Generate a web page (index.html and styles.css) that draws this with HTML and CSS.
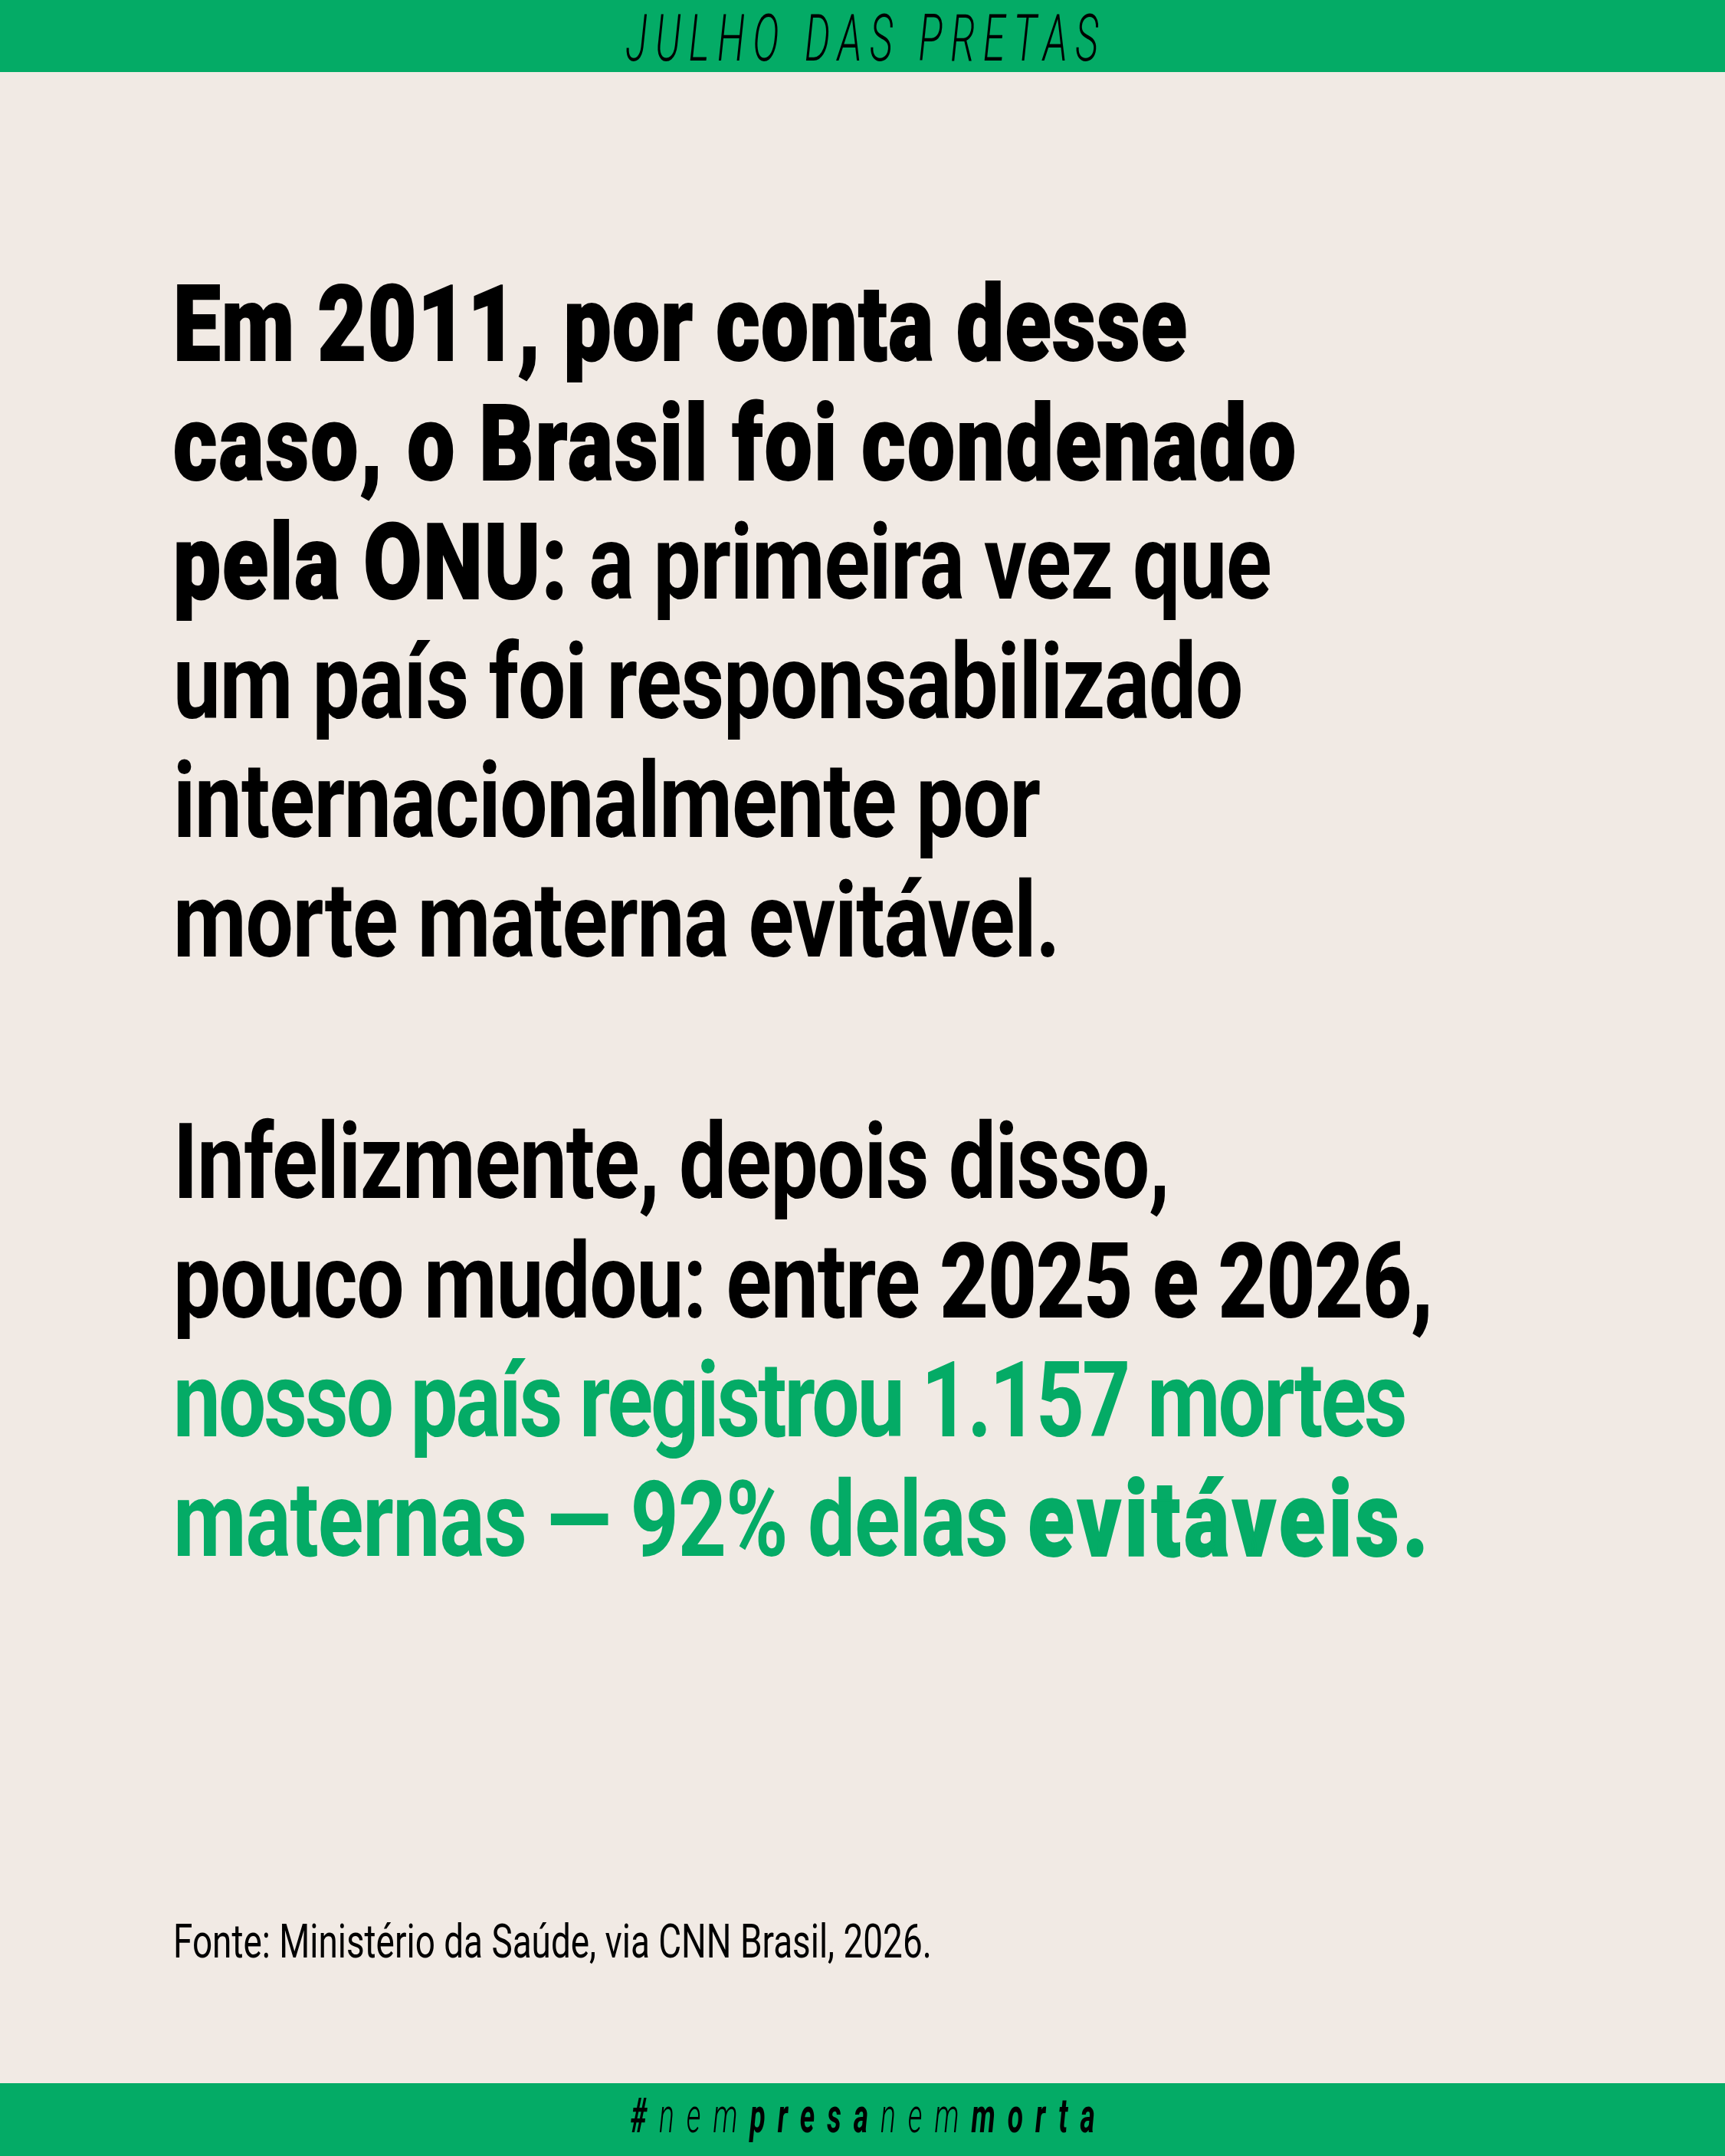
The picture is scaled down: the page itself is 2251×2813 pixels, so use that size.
FILE: index.html
```html
<!DOCTYPE html>
<html lang="pt-BR">
<head>
<meta charset="utf-8">
<title>Julho das Pretas</title>
<link rel="stylesheet" href="styles.css">
</head>
<body>
<div class="page">
  <header class="topbar"><span class="topbar-text">JULHO DAS PRETAS</span></header>
  <main class="content">
    <p class="para">
      <span class="line heavy first">Em 2011, por conta desse</span>
      <span class="line heavy">caso, o Brasil foi condenado</span>
      <span class="line"><b class="black">pela ONU:</b> a primeira vez que</span>
      <span class="line">um país foi responsabilizado</span>
      <span class="line">internacionalmente por</span>
      <span class="line">morte materna evitável.</span>
    </p>
    <p class="para second">
      <span class="line">Infelizmente, depois disso,</span>
      <span class="line">pouco mudou: entre <b class="strong">2025 e 2026,</b></span>
      <span class="line green narrow">nosso país registrou 1.157 mortes</span>
      <span class="line green">maternas — 92% delas <b class="black wide">evitáveis.</b></span>
    </p>
  </main>
  <p class="source"><span class="source-text">Fonte: Ministério da Saúde, via CNN Brasil, 2026.</span></p>
  <footer class="bottombar"><span class="tag">#<span class="light">nem</span>presa<span class="light">nem</span>morta</span></footer>
</div>
</body>
</html>
```

FILE: styles.css
```css
* { box-sizing: border-box; }
html, body { margin: 0; padding: 0; }
body {
  background: #f1eae4;
  font-family: Roboto, "Liberation Sans", sans-serif;
  color: #000;
}
.page {
  width: 2251px;
  height: 2813px;
  display: flex;
  flex-direction: column;
  overflow: hidden;
}
.topbar {
  height: 94px;
  flex: none;
  background: #04ab66;
  display: flex;
  align-items: flex-start;
  justify-content: center;
  padding-top: 8px;
}
.topbar-text {
  display: inline-block;
  font-size: 85px;
  line-height: 1;
  font-style: italic;
  font-weight: 300;
  letter-spacing: 0.2em;
  padding-left: 0.2em;
  transform: scaleX(0.614);
  transform-origin: center;
  white-space: nowrap;
}
.content {
  flex: 1;
  padding: 252px 0 0 226px;
}
.para {
  margin: 0;
  font-size: 138px;
  line-height: 155.5px;
  font-weight: 700;
  letter-spacing: -0.01em;
}
.para.second { margin-top: 160px; }
.line {
  display: block;
  white-space: nowrap;
  transform: scaleX(0.8);
  transform-origin: left center;
}
b { font-weight: inherit; }
.heavy {
  font-weight: 900;
  letter-spacing: 0.02em;
  -webkit-text-stroke: 2px currentColor;
}
.heavy.first { letter-spacing: 0.012em; }
b.black {
  font-weight: 900;
  letter-spacing: 0.017em;
  -webkit-text-stroke: 2px currentColor;
}
b.black.wide { letter-spacing: 0.043em; }
b.strong { font-weight: 900; }
.narrow { letter-spacing: -0.027em; }
.green { color: #04ab66; }
.source {
  margin: 0 0 149px 226px;
  font-size: 62px;
  line-height: 72px;
  font-weight: 400;
  flex: none;
}
.source-text {
  display: inline-block;
  white-space: nowrap;
  transform: scaleX(0.74);
  transform-origin: left center;
}
.bottombar {
  height: 95px;
  flex: none;
  background: #04ab66;
  display: flex;
  align-items: center;
  justify-content: center;
  padding-bottom: 9px;
}
.tag {
  display: inline-block;
  font-size: 62px;
  line-height: 1;
  font-style: italic;
  font-weight: 700;
  letter-spacing: 0.43em;
  padding-left: 0.43em;
  transform: scaleX(0.6);
  transform-origin: center;
  white-space: nowrap;
}
.tag .light { font-weight: 300; }
```
